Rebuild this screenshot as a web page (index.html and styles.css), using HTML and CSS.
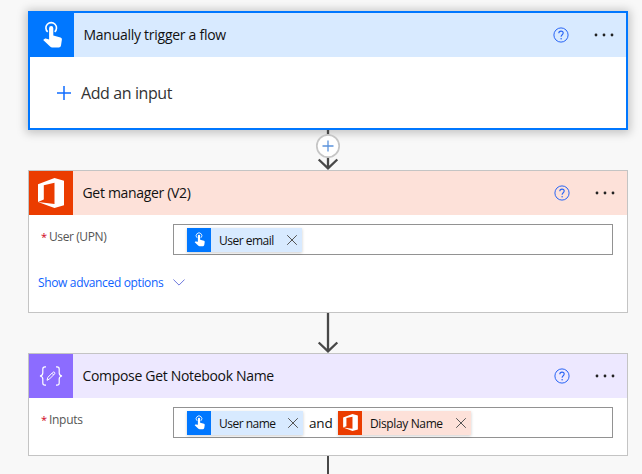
FILE: index.html
```html
<!DOCTYPE html>
<html lang="en">
<head>
<meta charset="utf-8">
<title>Flow designer</title>
<link rel="stylesheet" href="styles.css">
</head>
<body>
<svg class="defs" aria-hidden="true">
  <symbol id="touch" viewBox="0 0 24 28">
    <path d="M5.7 10.9A5.3 5.3 0 1 1 12.7 10.9" fill="none" stroke="currentColor" stroke-width="1.6"/>
    <path d="M7.1 7.2a2.1 2.1 0 0 1 4.2 0v7.3l7.2 1.9q1.600.5 1.400 2.100l-.9 5.900q-.3 2.100-2.200 2.100h-6.600q-1.200 0-2.100-.9l-6.900-6.600 1.100-1.100q.6-.5 1.400-.3l3.400.8z" fill="currentColor"/>
  </symbol>
  <symbol id="office" viewBox="0 0 26 30">
    <path fill="currentColor" fill-rule="evenodd" d="M0 6.200 16.500 0 26 2.700V27.300L16.500 30 0 23.900 16.500 25.900V4.700L5.800 7.200V21.500L0 23.900z"/>
  </symbol>
  <symbol id="help" viewBox="0 0 16 16">
    <circle cx="8" cy="8" r="7.100" fill="none" stroke="currentColor" stroke-width="1"/>
    <path d="M5.800 6.200c0-1.400 1-2.100 2.200-2.100s2.200.7 2.200 2c0 1.600-2.100 1.700-2.100 3.600" fill="none" stroke="currentColor" stroke-width="1.100"/>
    <circle cx="8.100" cy="11.700" r=".75" fill="currentColor"/>
  </symbol>
  <symbol id="more" viewBox="0 0 20 4">
    <circle cx="2" cy="2" r="1.400"/><circle cx="10" cy="2" r="1.400"/><circle cx="18" cy="2" r="1.400"/>
  </symbol>
  <symbol id="close" viewBox="0 0 10 10">
    <path d="M.2.2l9.600 9.600M9.800.2.2 9.800" fill="none" stroke="currentColor" stroke-width="1"/>
  </symbol>
</svg>
<main class="flow">
  <section class="card trigger">
    <header class="head">
      <div class="tile"><svg class="touch"><use href="#touch"/></svg></div>
      <h2 class="title t-trigger">Manually trigger a flow</h2>
      <svg class="help"><use href="#help"/></svg>
      <svg class="more"><use href="#more"/></svg>
    </header>
    <div class="add">
      <svg class="plus" viewBox="0 0 14 14"><path d="M7 0v14M0 7h14"/></svg>
      <span class="add-label">Add an input</span>
    </div>
  </section>

  <svg class="link" viewBox="0 0 28 40">
    <path class="wire" d="M14 0v38M4.700 29.500 14 38.300l9.300-8.800"/>
    <circle class="knob" cx="14" cy="16" r="11.200"/>
    <path class="knob-plus" d="M14 10.500v11M8.500 16h11"/>
  </svg>

  <section class="card office">
    <header class="head">
      <div class="tile"><svg class="office-logo"><use href="#office"/></svg></div>
      <h2 class="title t-manager">Get manager (V2)</h2>
      <svg class="help"><use href="#help"/></svg>
      <svg class="more"><use href="#more"/></svg>
    </header>
    <div class="row">
      <div class="label"><span class="star">*</span><span class="l-user">User (UPN)</span></div>
      <div class="field">
        <span class="token blue tk-email"><span class="token-icon"><svg class="touch-sm"><use href="#touch"/></svg></span><span class="token-text x-email">User email</span><svg class="close"><use href="#close"/></svg></span>
      </div>
    </div>
    <div class="advanced"><span class="adv-label">Show advanced options</span>
      <svg class="chevron" viewBox="0 0 12 7"><path d="M.4.500 6 6.100 11.600.500"/></svg>
    </div>
  </section>

  <svg class="link" viewBox="0 0 28 40">
    <path class="wire" d="M14 0v38M4.700 29.500 14 38.300l9.300-8.800"/>
  </svg>

  <section class="card compose">
    <header class="head">
      <div class="tile">
        <svg class="braces" viewBox="0 0 24 20" fill="none" stroke="currentColor">
          <path stroke-width="1.200" d="M7 .8H6Q3.800.8 3.800 3v4Q3.800 9.500 1 10q2.800.5 2.800 3v4q0 2.200 2.200 2.200H7M17 .8h1q2.200 0 2.200 2.200v4q0 2.500 2.800 3-2.800.5-2.800 3v4q0 2.200-2.200 2.200h-1"/>
          <path stroke-width="1" d="M8 14.300l.9-3 5-5q.8-.7 1.600 0t.1 1.600l-5 5zM12.900 7.200l1.800 1.800"/>
        </svg>
      </div>
      <h2 class="title t-compose">Compose Get Notebook Name</h2>
      <svg class="help"><use href="#help"/></svg>
      <svg class="more"><use href="#more"/></svg>
    </header>
    <div class="row">
      <div class="label"><span class="star">*</span><span class="l-inputs">Inputs</span></div>
      <div class="field">
        <span class="token blue tk-name"><span class="token-icon"><svg class="touch-sm"><use href="#touch"/></svg></span><span class="token-text x-name">User name</span><svg class="close"><use href="#close"/></svg></span>
        <span class="and">and</span>
        <span class="token red tk-display"><span class="token-icon"><svg class="office-sm"><use href="#office"/></svg></span><span class="token-text x-display">Display Name</span><svg class="close"><use href="#close"/></svg></span>
      </div>
    </div>
  </section>
  <div class="tail"></div>
</main>
</body>
</html>
```
FILE: styles.css
```css
* { box-sizing: border-box; }
body {
  margin: 0;
  height: 474px;
  overflow: hidden;
  background: #f8f8f8;
  color: #111;
  font-family: "Open Sans", "Noto Sans", sans-serif;
  font-size: 13px;
}
svg { display: block; flex: none; }
.defs { position: absolute; width: 0; height: 0; }
.flow {
  width: 600px;
  margin-left: 28px;
  padding-top: 11px;
  display: flex;
  flex-direction: column;
  align-items: center;
}
.card { width: 600px; flex: none; background: #fff; border: 1px solid #c4c4c4; }
.trigger { height: 119px; border: 2px solid #0077ff; box-shadow: 0 1px 9px 2px rgba(0, 0, 0, .22); }
.office { height: 143px; }
.compose { height: 103px; }

.head { display: flex; align-items: center; height: 44px; padding-right: 13px; }
.trigger .head { background: #d8eaff; }
.office .head { background: #fde1d9; }
.compose .head { background: #ede8ff; }
.tile { display: flex; align-items: center; justify-content: center; width: 44px; height: 44px; color: #fff; }
.trigger .tile { background: #0077ff; }
.office .tile { background: #eb3c00; }
.compose .tile { background: #8c6cff; }
.title { flex: 1; margin: 0 0 0 9.5px; font-size: 14px; line-height: 20px; font-weight: 400; white-space: nowrap; }
.t-trigger { letter-spacing: -.27px; }
.t-manager { letter-spacing: -.32px; }
.t-compose { letter-spacing: -.32px; }
.touch { width: 24px; height: 28px; margin-left: 4px; }
.office-logo { width: 26px; height: 30px; margin-right: 1px; }
.braces { width: 24px; height: 20px; }
.help { width: 16px; height: 16px; color: #2864f5; }
.more { width: 20px; height: 4px; margin-left: 24.5px; margin-right: -.5px; fill: #222; }

.add { display: flex; align-items: center; height: 71px; padding-left: 27px; }
.plus { width: 14px; height: 14px; fill: none; stroke: #0f6cff; stroke-width: 1.5; }
.add-label { margin-left: 10px; font-size: 16px; letter-spacing: -.4px; color: #333; }

.link { width: 28px; height: 40px; }
.wire { fill: none; stroke: #484848; stroke-width: 2.3; }
.knob { fill: #fff; stroke: #c6c6c6; stroke-width: 1.7; }
.knob-plus { fill: none; stroke: #5b93dc; stroke-width: 1.3; }

.row { display: flex; padding: 9px 14px 0 12px; }
.label { display: flex; width: 132px; font-size: 12px; line-height: 17px; padding-top: 4px; color: #555; }
.l-user { letter-spacing: -.4px; }
.l-inputs { letter-spacing: -.3px; }
.star { width: 8px; color: #d00020; font-size: 11px; }
.field { display: flex; align-items: center; width: 440px; height: 31px; padding-left: 13px; border: 1px solid #929292; background: #fff; }
.token { display: flex; align-items: center; height: 24px; padding-right: 5px; font-size: 12px; box-shadow: 0 1px 3px rgba(0, 0, 0, .2); }
.blue { background: #d8eaff; }
.red { background: #fde1d9; }
.token-icon { display: flex; align-items: center; justify-content: center; width: 24px; height: 24px; color: #fff; background: #0077ff; }
.red .token-icon { background: #eb3c00; }
.token-text { flex: 1; padding: 2px 0 0 8px; white-space: nowrap; }
.x-email { letter-spacing: -.5px; }
.x-name { letter-spacing: -.5px; }
.x-display { letter-spacing: -.37px; }
.touch-sm { width: 13px; height: 15px; margin-left: 2px; }
.office-sm { width: 15px; height: 17px; }
.close { width: 10px; height: 10px; color: #555; }
.tk-email { width: 115px; }
.tk-name { width: 116px; }
.tk-display { width: 133px; }
.and { width: 35px; padding-left: 6px; font-size: 13.5px; letter-spacing: -.2px; }

.advanced { display: flex; align-items: center; height: 18px; margin: 18px 0 0 9px; font-size: 12px; letter-spacing: -.35px; color: #0f62fe; }
.adv-label { width: 135px; white-space: nowrap; }
.chevron { width: 12px; height: 7px; fill: none; stroke: #6d78dc; stroke-width: 1; }
.tail { width: 2px; height: 18px; background: #484848; }
```
